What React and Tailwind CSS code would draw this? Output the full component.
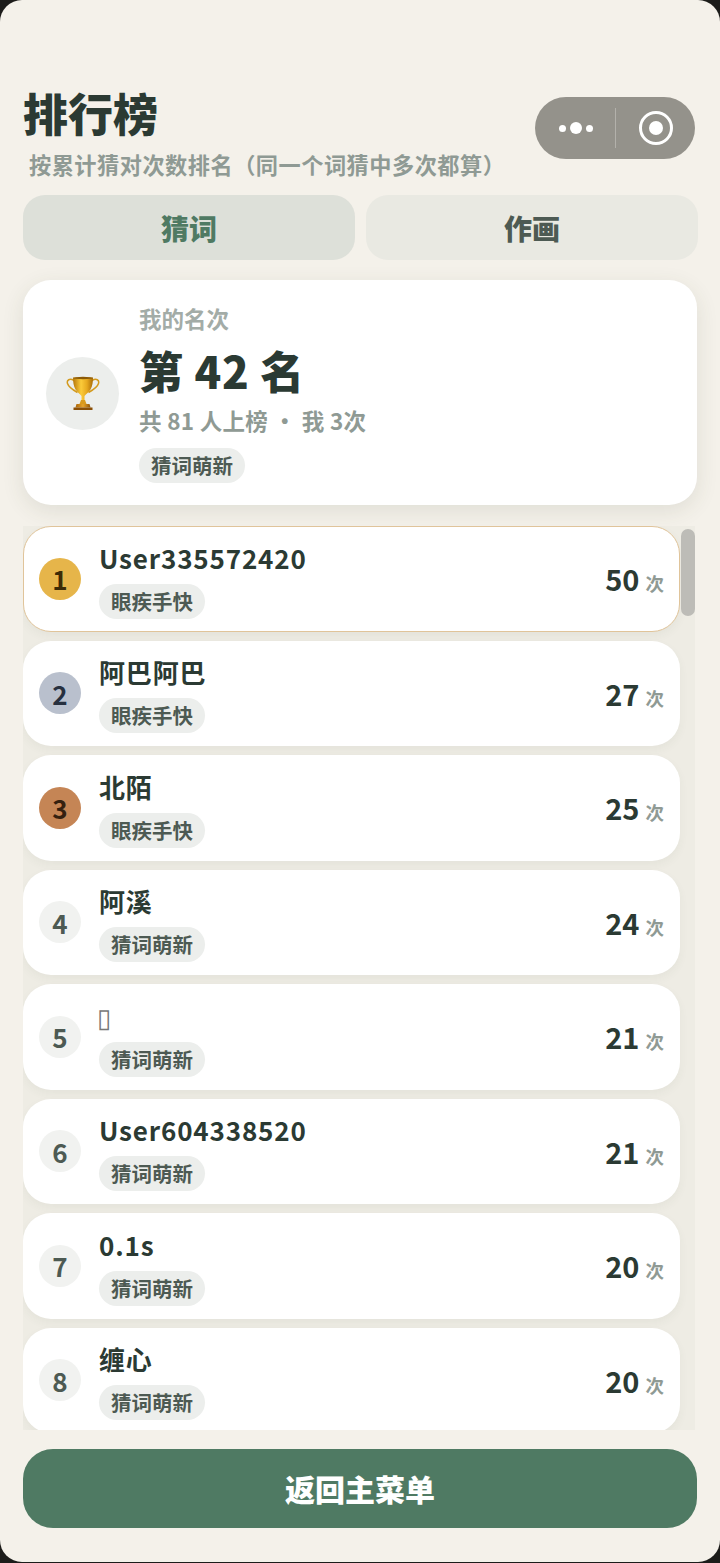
const rows = [
  { r: 1, name: "User335572420", tag: "眼疾手快", n: 50 },
  { r: 2, name: "阿巴阿巴", tag: "眼疾手快", n: 27 },
  { r: 3, name: "北陌", tag: "眼疾手快", n: 25 },
  { r: 4, name: "阿溪", tag: "猜词萌新", n: 24 },
  { r: 5, name: "▯", tag: "猜词萌新", n: 21, thin: true },
  { r: 6, name: "User604338520", tag: "猜词萌新", n: 21 },
  { r: 7, name: "0.1s", tag: "猜词萌新", n: 20 },
  { r: 8, name: "缠心", tag: "猜词萌新", n: 20 },
];

const badge = {
  1: "bg-[#e6b54a] text-[#3d2b06]",
  2: "bg-[#b9c0cd] text-[#27303f]",
  3: "bg-[#c58555] text-[#35200f]",
};

const FONT = "font-['Noto_Sans_CJK_SC','Noto_Sans',sans-serif]";

function Trophy() {
  return (
    <svg width="34" height="36" viewBox="0 0 34 36">
      <defs>
        <linearGradient id="cup" x1="0" x2="1" y1="0" y2="0">
          <stop offset="0" stopColor="#b5760a" />
          <stop offset="0.4" stopColor="#fbcb3a" />
          <stop offset="0.7" stopColor="#e7a91f" />
          <stop offset="1" stopColor="#a96c08" />
        </linearGradient>
        <linearGradient id="base" x1="0" x2="1" y1="0" y2="0">
          <stop offset="0" stopColor="#a9640a" />
          <stop offset="0.5" stopColor="#e8a52a" />
          <stop offset="1" stopColor="#8f5207" />
        </linearGradient>
      </defs>
      <path d="M8 4.500C3.500 2 .5 4 1.500 7.500 2.700 11.500 7 14 11.500 16.500M26 4.500c4.500-2.500 7.500-.5 6.500 3C31.300 11.500 27 14 22.500 16.500" fill="none" stroke="#d39a1e" strokeWidth="1.5" />
      <path d="M7 1.500h20c0 4-.5 8.500-2.500 12-1.500 2.700-4.500 4.500-6 6.500v6h-3v-6c-1.500-2-4.500-3.800-6-6.500C7.500 10 7 5.500 7 1.500z" fill="url(#cup)" />
      <ellipse cx="17" cy="2" rx="10" ry="1.200" fill="#8c5a07" />
      <path d="M15 24h4l1.500 4h-7z" fill="#d99a1e" />
      <path d="M10.500 28h13l1 3.500h-15z" fill="url(#base)" />
      <rect x="7.500" y="31.500" width="19" height="2.500" fill="#8a4f07" />
    </svg>
  );
}

function Tag({ children }) {
  return (
    <div className="h-[35px] w-fit rounded-full bg-[#eceeec] px-3 text-[20.5px] leading-[35px] font-bold text-[#4d5a53]">
      {children}
    </div>
  );
}

function Row({ r, name, tag, n, thin }) {
  return (
    <div
      className={`flex h-[105.5px] w-[657px] shrink-0 items-center rounded-[28px] bg-white shadow-[0_4px_10px_rgba(60,70,50,0.05)] ${
        r === 1 ? "border border-[#e0c49a] px-[15px]" : "px-4"
      }`}
    >
      <div
        className={`flex size-[42px] shrink-0 items-center justify-center rounded-full text-[26px] font-bold ${
          badge[r] || "bg-[#f1f2f0] text-[#4d5a53]"
        }`}
      >
        {r}
      </div>
      <div className="ml-[18px] flex min-w-0 flex-1 flex-col gap-[9px] pt-[2px]">
        <div
          className={`h-[34px] text-[26px] leading-[34px] tracking-[0.85px] ${thin ? "-ml-[2px] font-normal text-[#777]" : "font-bold text-[#2b3a33]"}`}
        >
          {name}
        </div>
        <Tag>{tag}</Tag>
      </div>
      <div className="flex items-baseline gap-[6px] text-[#2b3a33]">
        <span className="text-[29px] font-bold">{n}</span>
        <span className="text-[18.5px] font-bold text-[#8f9a94]">次</span>
      </div>
    </div>
  );
}

export default function App() {
  return (
    <div className="h-[1563px] w-[720px] bg-[#1c1c1a] pb-px">
      <div className={`flex h-[1562px] w-[720px] flex-col overflow-hidden rounded-[22px] bg-[#f4f1ea] px-[23px] ${FONT}`}>
        <div className="relative h-[195px] shrink-0">
          <h1 className="pt-[82px] text-[45px] leading-[62px] font-black text-[#2b3a33]">排行榜</h1>
          <p className="pt-[5px] pl-[6px] text-[22.2px] leading-[30px] font-bold tracking-[0.5px] text-[#8f9a94]">
            按累计猜对次数排名（同一个词猜中多次都算）
          </p>
          <div className="absolute top-[97px] left-[512px] flex h-[62px] w-[160px] items-center rounded-full bg-[#94928b]">
            <div className="flex w-[80px] items-center justify-center gap-[4px] pl-[1px]">
              <span className="size-[7px] rounded-full bg-white" />
              <span className="size-[12px] rounded-full bg-white" />
              <span className="size-[7px] rounded-full bg-white" />
            </div>
            <span className="h-[40px] w-px bg-[#b3b1ab]" />
            <div className="flex flex-1 items-center justify-center">
              <span className="flex size-[34px] items-center justify-center rounded-full border-[3px] border-white">
                <span className="size-[14px] rounded-full bg-white" />
              </span>
            </div>
          </div>
        </div>

        <div className="flex shrink-0 gap-[11px]">
          <div className="flex h-[65px] w-[332px] shrink-0 items-center justify-center rounded-[22px] bg-[#dde0d9] text-[28px] font-black text-[#4f7a63]">
            猜词
          </div>
          <div className="flex h-[65px] w-[332px] shrink-0 items-center justify-center rounded-[22px] bg-[#e9e9e2] text-[28px] font-black text-[#4d5a53]">
            作画
          </div>
        </div>

        <div className="mt-[20px] flex h-[225px] w-[674px] shrink-0 items-center rounded-[28px] bg-white pl-[23px] shadow-[0_6px_22px_rgba(60,70,50,0.11)]">
          <div className="mt-[2px] flex size-[73px] shrink-0 items-center justify-center rounded-full bg-[#eceeec]">
            <Trophy />
          </div>
          <div className="ml-[20px] flex flex-col">
            <div className="text-[22.5px] leading-[30px] font-bold text-[#a3aca7]">我的名次</div>
            <div className="mt-[7px] text-[44px] leading-[60px] font-black tracking-[0.7px] text-[#2b3a33]">第 42 名</div>
            <div className="mt-[5px] text-[22.5px] leading-[30px] font-bold tracking-[0.3px] text-[#8f9a94]">共 81 人上榜 ・ 我 3次</div>
            <div className="mt-[13px]"><Tag>猜词萌新</Tag></div>
          </div>
        </div>

        <div className="relative mt-[21px] h-[904px] w-[672px] shrink-0 overflow-hidden bg-[#eeece4]">
          <div className="flex flex-col gap-[9px]">
            {rows.map((x) => (
              <Row key={x.r} {...x} />
            ))}
          </div>
          <div className="absolute top-[3px] left-[658px] h-[87px] w-[14px] rounded-full bg-[#bdbcb7]" />
        </div>

        <div className="mt-[19px] flex h-[79px] w-[674px] shrink-0 items-center justify-center rounded-[30px] bg-[#4f7a63] text-[30px] font-black text-white">
          返回主菜单
        </div>
      </div>
    </div>
  );
}
